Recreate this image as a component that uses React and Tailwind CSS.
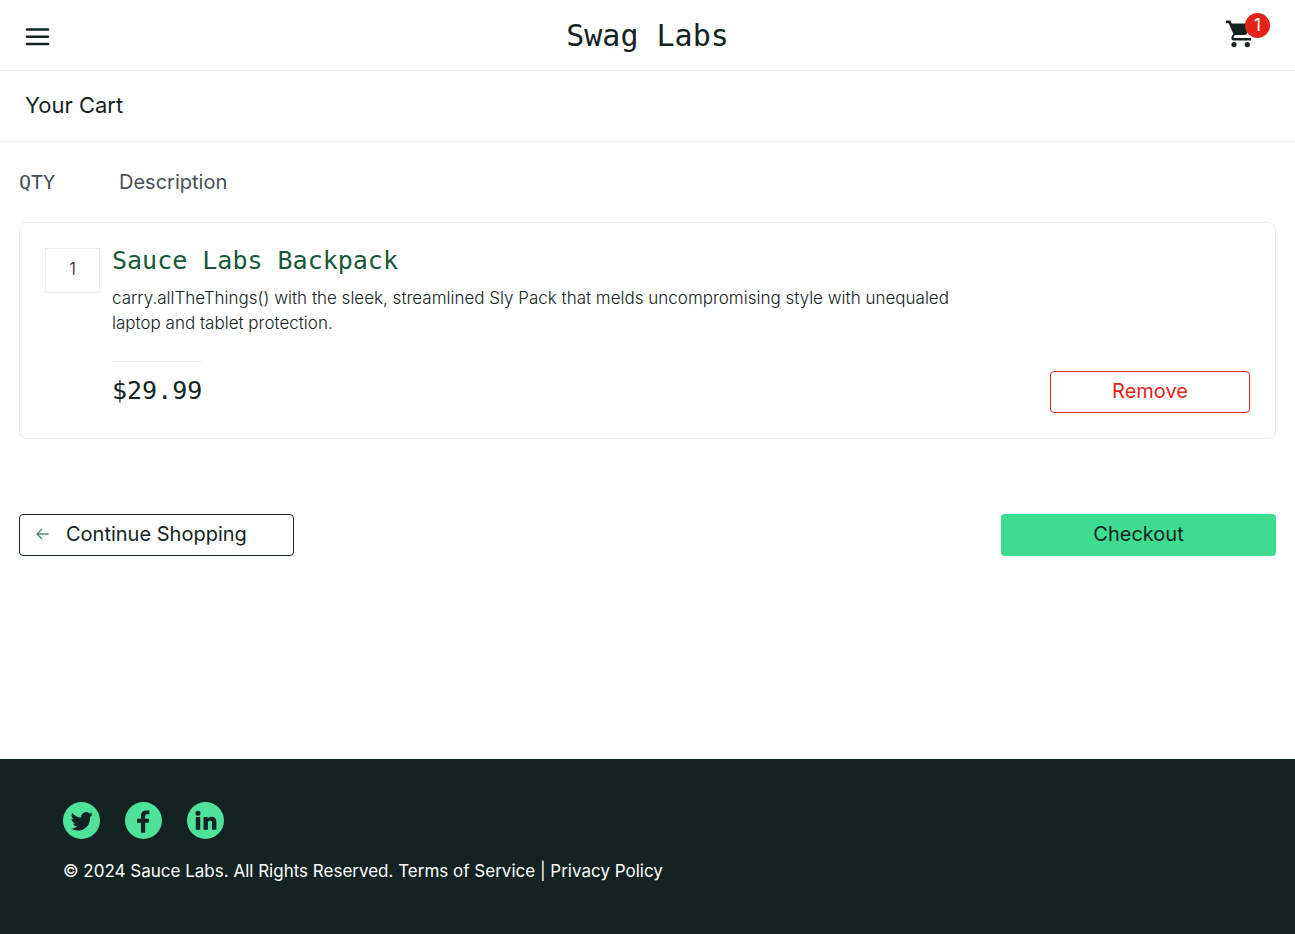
import React from "react";

const mono = "font-['DejaVu_Sans_Mono',monospace]";

function CartIcon() {
  return (
    <svg viewBox="0 0 26 28" className="h-7 w-[26px]" aria-hidden="true">
      <path
        fill="#132322"
        d="M0 .6h4.400l1.300 2.800h18.600c1 0 1.500 1 1.100 1.900l-4.600 8.400c-.4.8-1.300 1.300-2.300 1.300H8.800l-1.200 2.300c-.1.3 0 .7.4.7H25v2.600H7.800c-2 0-3.100-2.100-2.200-3.800l1.700-3.100L2.700 3.200H0z"
      />
      <circle cx="8" cy="24.600" r="2.600" fill="#132322" />
      <circle cx="21.300" cy="24.600" r="2.600" fill="#132322" />
    </svg>
  );
}

function Header() {
  return (
    <header className="grid h-[71px] grid-cols-[1fr_auto_1fr] items-center border-b border-[#ededed] px-[25px]">
      <button type="button" aria-label="Open Menu" className="flex h-[25px] w-[25px] items-center justify-center">
        <svg viewBox="0 0 25 25" className="h-[25px] w-[25px]" aria-hidden="true">
          <path d="M2 6.500h21M2 13.700h21M2 21h21" stroke="#132322" strokeWidth="2.600" strokeLinecap="round" />
        </svg>
      </button>
      <div className={`${mono} pt-0.5 text-[30px] leading-10`}>Swag Labs</div>
      <a href="#cart" aria-label="Cart, 1 item" className="relative flex h-11 w-11 items-start justify-self-end pt-[7px]">
        <CartIcon />
        <span className="absolute top-0 right-0 flex h-[25px] w-[25px] items-center justify-center rounded-full bg-[#e2231a] text-[17px] text-white">
          1
        </span>
      </a>
    </header>
  );
}

function CartItem() {
  return (
    <li className="flex gap-3 rounded-lg border border-[#ededed] p-[25px]">
      <div className="flex h-[45px] w-[55px] shrink-0 items-center justify-center border border-[#ededed] pb-0.5 text-[17px] font-light">
        1
      </div>
      <div className="flex grow flex-col">
        <a href="#item" className={`${mono} -mt-[3px] text-[25px] leading-8 text-[#18583a]`}>
          Sauce Labs Backpack
        </a>
        <p className="mt-[9px] max-w-[880px] text-[17px] leading-[25px] font-light">
          carry.allTheThings() with the sleek, streamlined Sly Pack that melds uncompromising style with unequaled
          laptop and tablet protection.
        </p>
        <div className="mt-[25px] flex items-start justify-between">
          <div className={`${mono} border-t border-[#ededed] pt-[13px] text-[25px] leading-8`}>$29.99</div>
          <button
            type="button"
            className="mt-[10px] h-[42px] w-[200px] rounded border border-[#e2231a] pb-[3px] text-xl text-[#e2231a]"
          >
            Remove
          </button>
        </div>
      </div>
    </li>
  );
}

const social = [
  {
    label: "Twitter",
    d: "M30.500 12.300q-1.300.5-2.800.8 1.700-1.200 2.200-2.600a9 9 0 0 1-2.900 1.200 4.900 4.900 0 0 0-8.200 4.200C15 15.700 11.800 14 9.400 11.200a4.700 4.700 0 0 0 1.500 6.400 4.500 4.500 0 0 1-2.200-.6c0 2.300 1.600 4.300 3.900 4.800a4.700 4.700 0 0 1-2.200.1 4.800 4.800 0 0 0 4.500 3.300A9.500 9.500 0 0 1 8 27.300c8.800 5.100 20.200.2 19.900-12 1-.8 1.900-1.700 2.600-3z",
  },
  {
    label: "Facebook",
    d: "M16.400 31.500V21.200h-4v-4h4v-2.700c0-3.800 2-5.800 5.500-5.800 1.300 0 2.500.2 3.200.4v3.500h-2.300c-1.600 0-2.100.9-2.100 2.200v2.400h4.200l-.6 4h-3.600v10.300z",
  },
  {
    label: "LinkedIn",
    d: "M9 15.400h4.600v13H9zM11.300 9a2.600 2.600 0 1 1 0 5.200 2.600 2.600 0 0 1 0-5.200zM17 15.400h4.300v1.800c.8-1.300 2.200-2.100 4-2.100 3.900 0 4.900 2.500 4.900 6v7.300h-4.500v-6.500c0-1.600-.2-3-2-3s-2.200 1.400-2.200 3v6.500H17z",
  },
];

function Footer() {
  return (
    <footer className="flex h-[175px] flex-col bg-[#132322] px-[63px] pt-[43px] text-white">
      <ul className="flex gap-[25px]">
        {social.map((s) => (
          <li key={s.label}>
            <a href={`#${s.label}`} aria-label={s.label}>
              <svg viewBox="0 0 38 38" className="h-[37px] w-[37px]" aria-hidden="true">
                <circle cx="19" cy="19" r="19" fill="#4fe29b" />
                <path d={s.d} fill="#132322" />
              </svg>
            </a>
          </li>
        ))}
      </ul>
      <p className="mt-5 text-[17px] leading-6">
        © 2024 Sauce Labs. All Rights Reserved. Terms of Service | Privacy Policy
      </p>
    </footer>
  );
}

export default function App() {
  return (
    <div className="flex min-h-screen flex-col bg-white font-['Inter',sans-serif] text-[#132322]">
      <Header />
      <div className="flex h-[71px] items-center border-b border-[#ededed] px-[25px] pb-0.5">
        <h1 className="text-[22px]">Your Cart</h1>
      </div>
      <main className="grow px-[19px] pt-6 pb-10">
        <div className="flex h-8 items-center text-xl text-[#485058]">
          <div className={`${mono} w-[100px]`}>QTY</div>
          <div>Description</div>
        </div>
        <ul className="mt-6">
          <CartItem />
        </ul>
        <div className="mt-[75px] flex justify-between">
          <button
            type="button"
            className="flex h-[42px] w-[275px] items-center gap-[17px] rounded border border-[#132322] px-4 pb-[3px] text-xl"
          >
            <svg viewBox="0 0 13 12" className="h-3 w-[13px]" aria-hidden="true">
              <path d="M12.500 6H1M6 1 1 6l5 5" fill="none" stroke="#4a8a6b" strokeWidth="1.300" />
            </svg>
            Continue Shopping
          </button>
          <button type="button" className="h-[42px] w-[275px] rounded bg-[#3ddc91] pb-[3px] text-xl">
            Checkout
          </button>
        </div>
      </main>
      <Footer />
    </div>
  );
}
